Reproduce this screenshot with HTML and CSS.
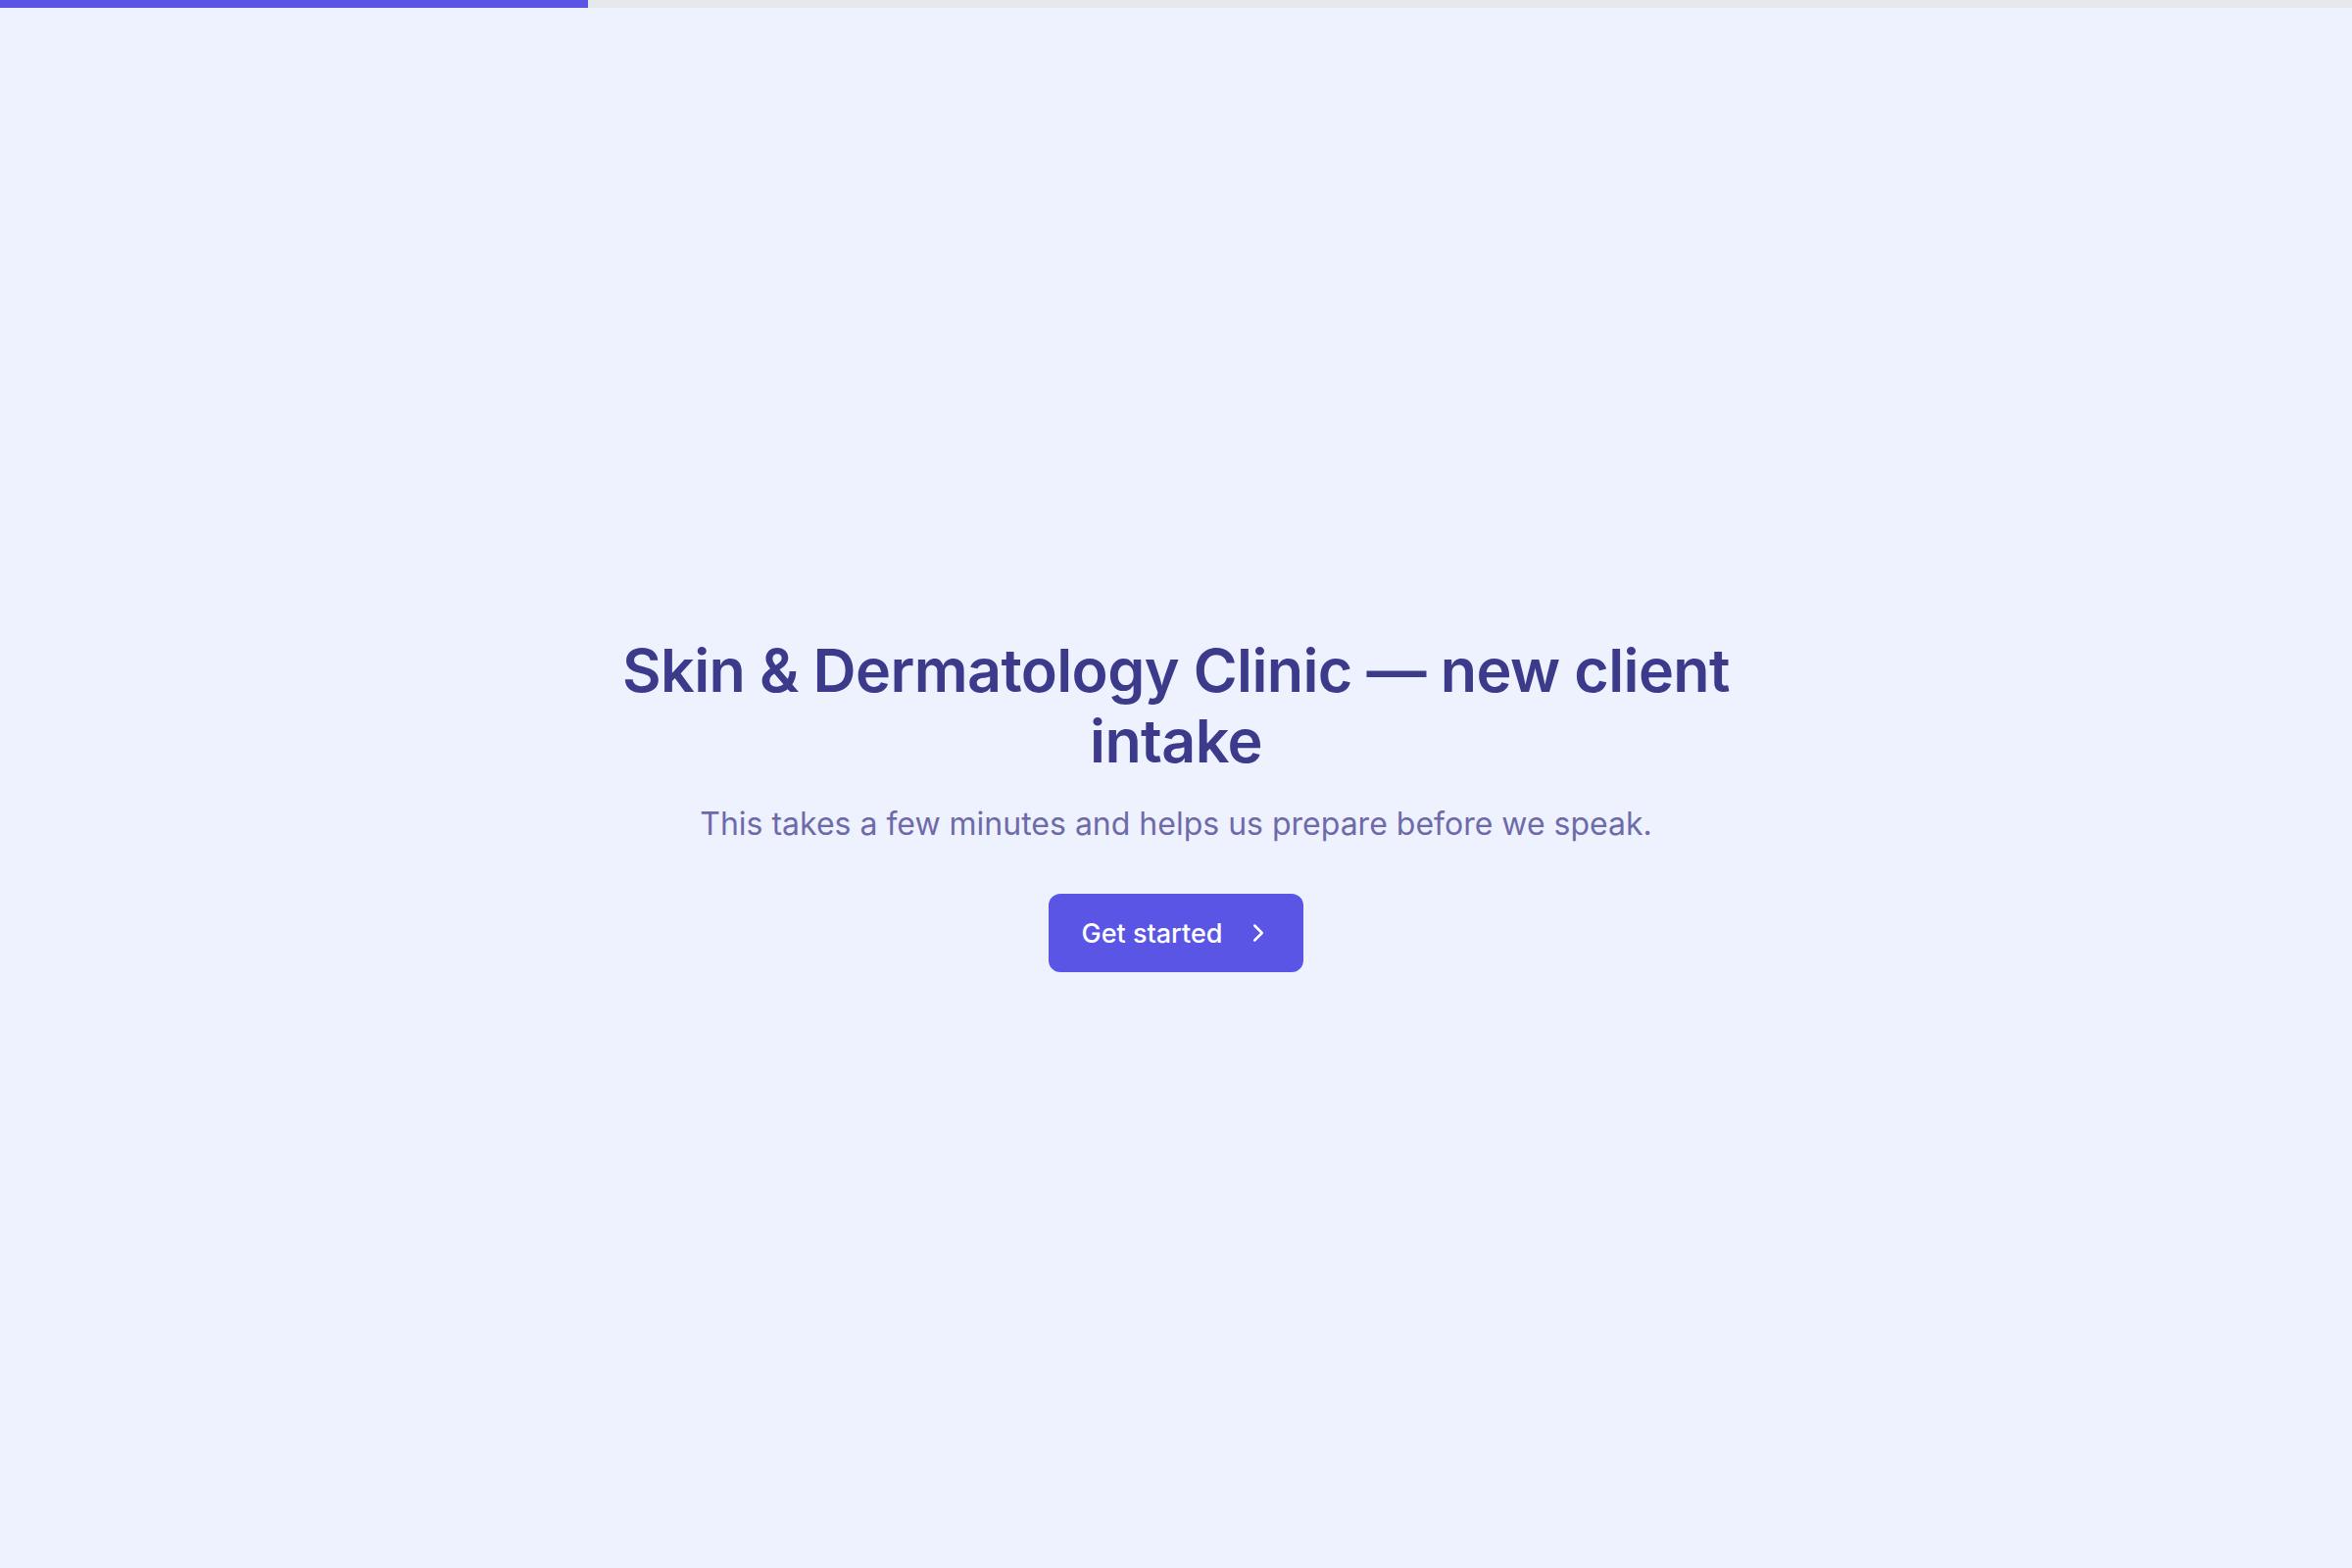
FILE: index.html
```html
<!DOCTYPE html>
<html lang="en">
<head>
<meta charset="utf-8">
<title>Skin &amp; Dermatology Clinic — new client intake</title>
<link rel="stylesheet" href="styles.css">
</head>
<body>
<div class="progress"><div class="progress-fill" style="width:25%"></div></div>
<main class="intro">
  <h1 class="title">Skin &amp; Dermatology Clinic — new client intake</h1>
  <p class="subtitle">This takes a few minutes and helps us prepare before we speak.</p>
  <button class="cta" type="button">
    <span>Get started</span>
    <svg class="chev" viewBox="0 0 24 24" width="24" height="24" fill="none" stroke="currentColor" stroke-width="2" stroke-linecap="round" stroke-linejoin="round"><path d="M9 6l6 6-6 6"/></svg>
  </button>
</main>
</body>
</html>
```
FILE: styles.css
```css
* { box-sizing: border-box; }
html, body { margin: 0; padding: 0; }
body {
  background: #eef2ff;
  font-family: Inter, "Noto Sans", sans-serif;
  min-height: 100vh;
  display: flex;
  flex-direction: column;
}
.progress {
  height: 8px;
  background: #e5e7eb;
  flex: none;
}
.progress-fill {
  height: 100%;
  background: #5b55e6;
}
.intro {
  flex: 1;
  display: flex;
  flex-direction: column;
  align-items: center;
  justify-content: center;
  text-align: center;
  padding: 32px 0 0;
}
.title {
  margin: 0;
  max-width: 1200px;
  font-size: 61px;
  line-height: 72px;
  font-weight: 600;
  color: #3c3a8a;
  letter-spacing: -0.01em;
}
.subtitle {
  margin: 26px 0 0;
  font-size: 32px;
  line-height: 46px;
  color: #6e6aaa;
}
.cta {
  margin-top: 48px;
  display: flex;
  align-items: center;
  gap: 21px;
  height: 80px;
  padding: 0 31px 0 33px;
  background: #5b55e6;
  color: #fff;
  border: none;
  border-radius: 12px;
  font-family: Inter, "Noto Sans", sans-serif;
  font-size: 27px;
  font-weight: 500;
  cursor: pointer;
}
.chev { width: 30px; height: 30px; }
```
